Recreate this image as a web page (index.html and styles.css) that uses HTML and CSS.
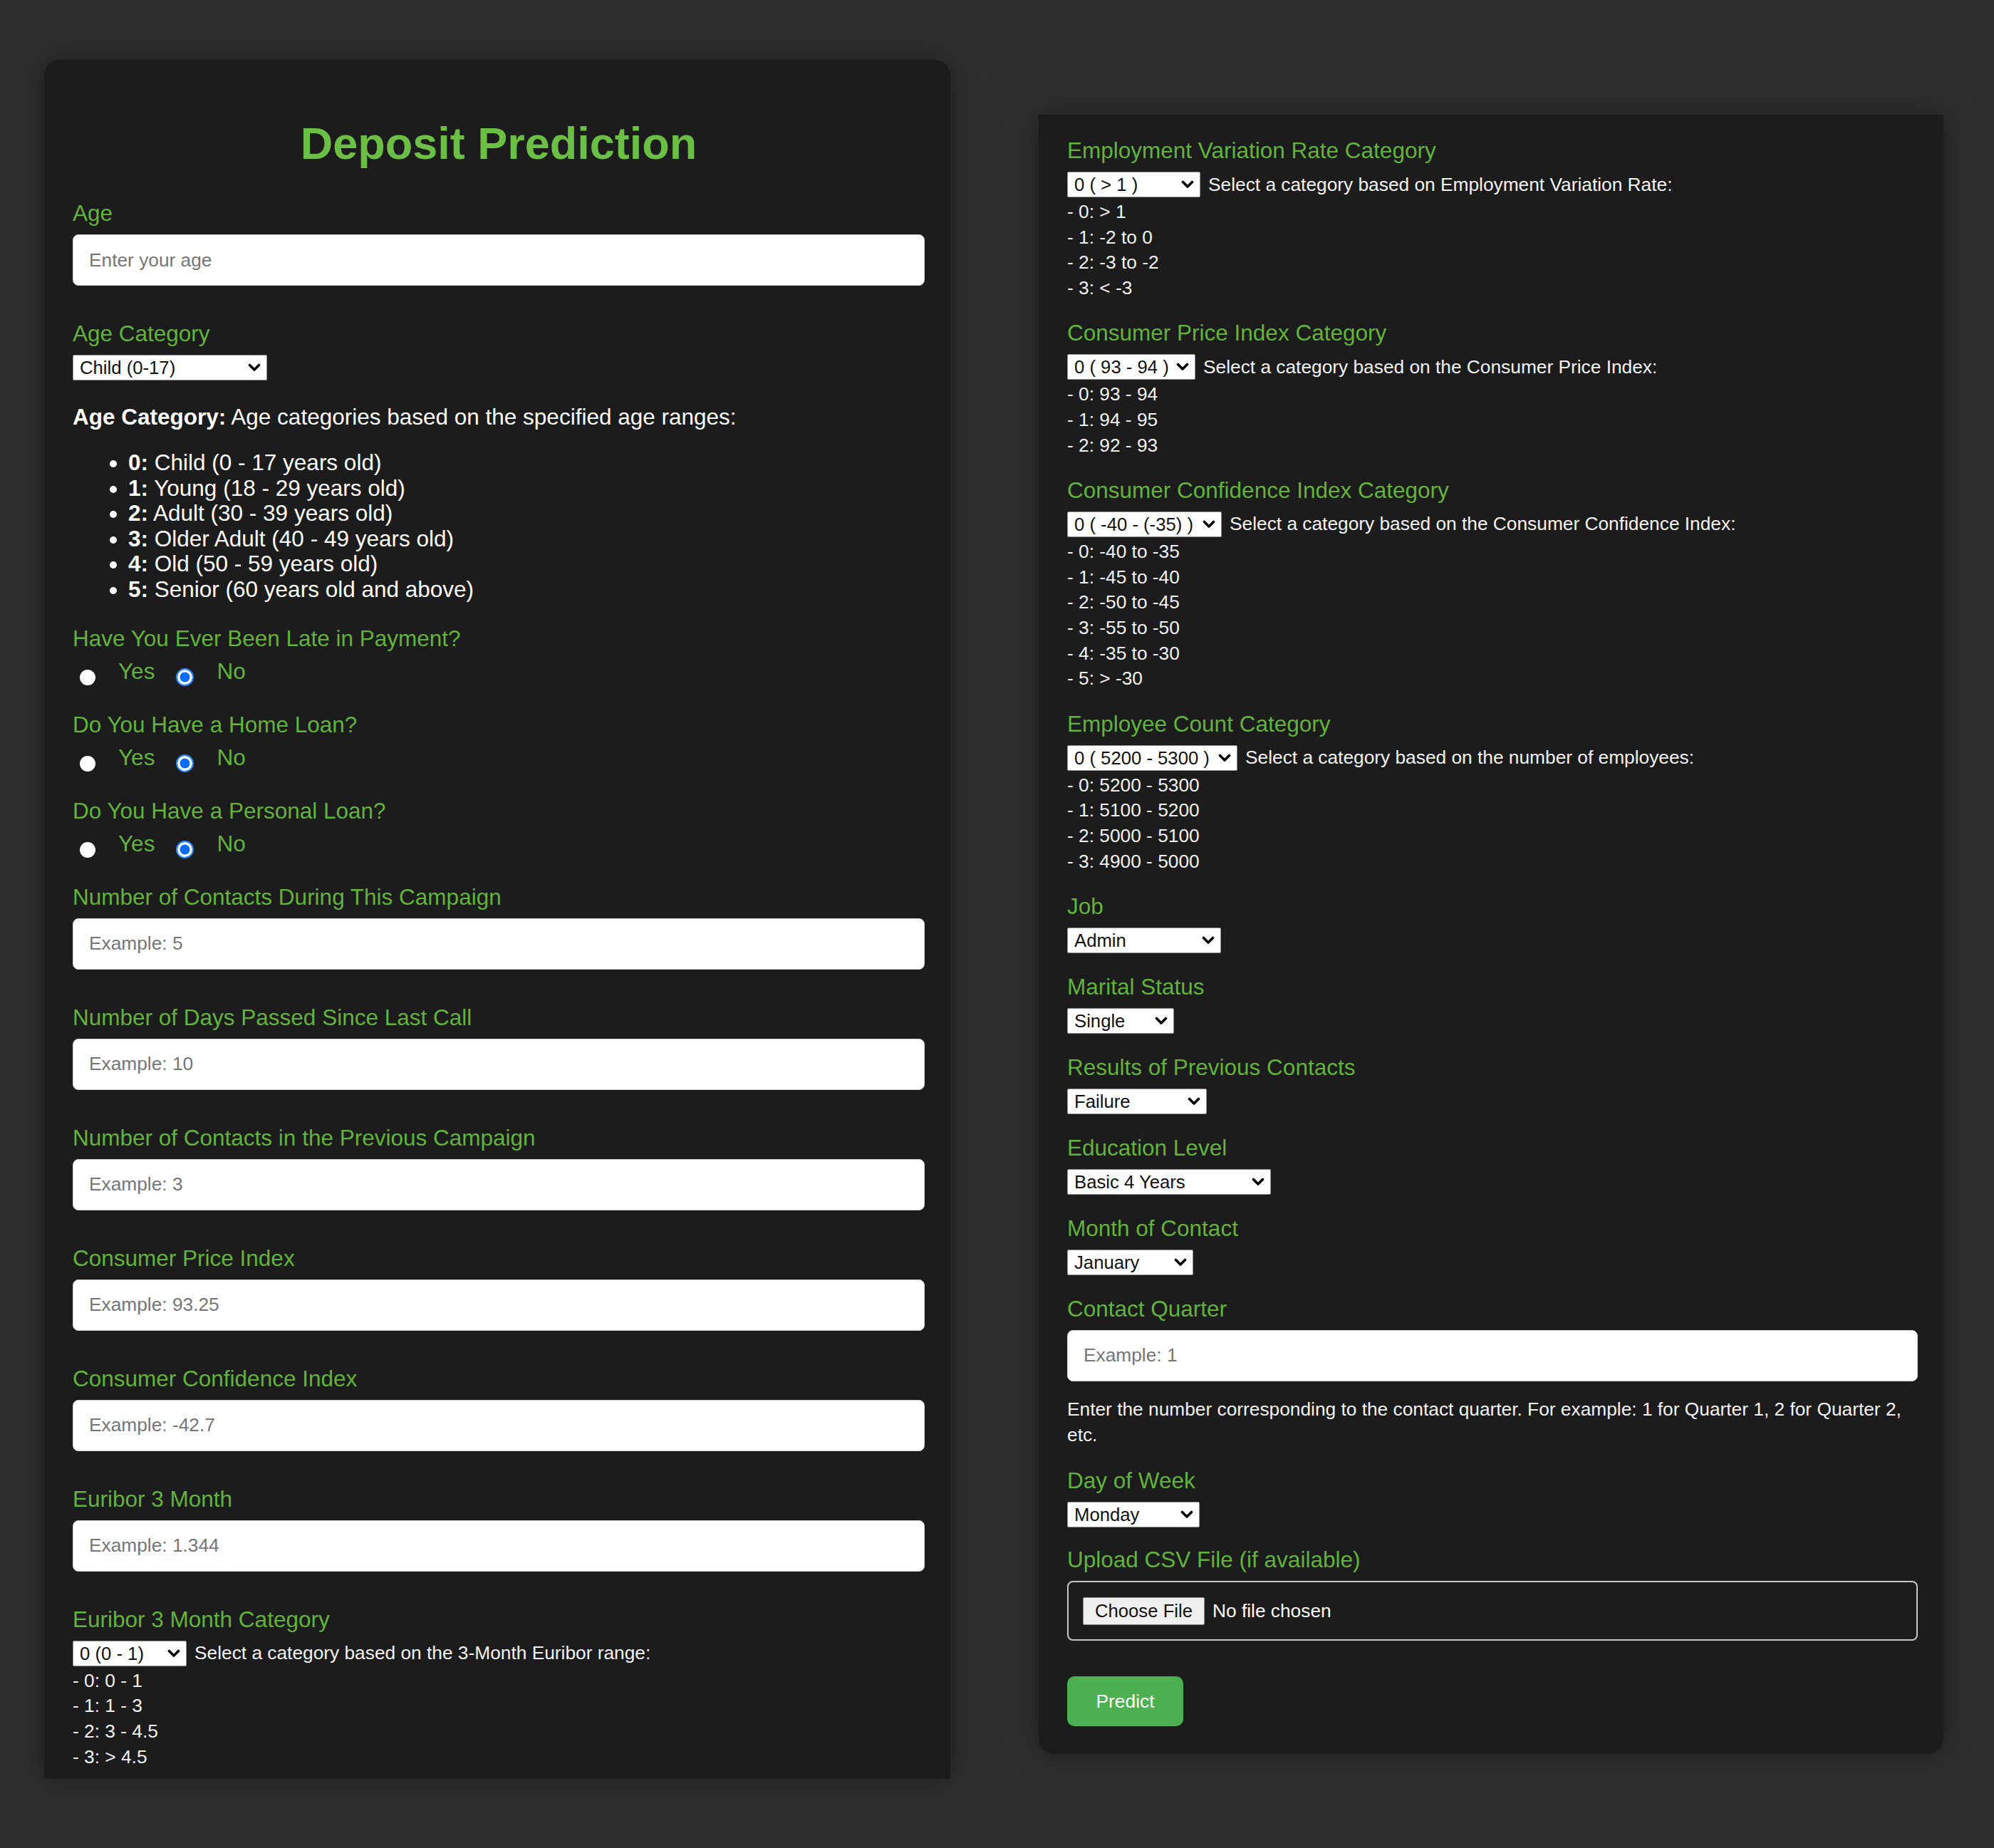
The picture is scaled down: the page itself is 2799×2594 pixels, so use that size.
FILE: index.html
```html
<!DOCTYPE html>
<html lang="en">
<head>
<meta charset="utf-8">
<title>Deposit Prediction</title>
<link rel="stylesheet" href="styles.css">
</head>
<body>
<main class="page">
  <section class="card card--left">
    <h1 class="title">Deposit Prediction</h1>

    <div class="field">
      <label class="label" for="age">Age</label>
      <input class="text-input" id="age" type="text" placeholder="Enter your age">
    </div>

    <div class="field-plain">
      <label class="label" for="agecat">Age Category</label>
      <select class="select select--age" id="agecat"><option>Child (0-17)</option></select>
    </div>

    <p class="note"><strong>Age Category:</strong> Age categories based on the specified age ranges:</p>
    <ul class="age-list">
      <li><strong>0:</strong> Child (0 - 17 years old)</li>
      <li><strong>1:</strong> Young (18 - 29 years old)</li>
      <li><strong>2:</strong> Adult (30 - 39 years old)</li>
      <li><strong>3:</strong> Older Adult (40 - 49 years old)</li>
      <li><strong>4:</strong> Old (50 - 59 years old)</li>
      <li><strong>5:</strong> Senior (60 years old and above)</li>
    </ul>

    <div class="radio-field">
      <div class="label label--tight">Have You Ever Been Late in Payment?</div>
      <div class="radio-row">
        <input class="radio" type="radio" name="late" id="late-yes"><label class="radio-text" for="late-yes">Yes</label>
        <input class="radio" type="radio" name="late" id="late-no" checked><label class="radio-text" for="late-no">No</label>
      </div>
    </div>

    <div class="radio-field">
      <div class="label label--tight">Do You Have a Home Loan?</div>
      <div class="radio-row">
        <input class="radio" type="radio" name="home" id="home-yes"><label class="radio-text" for="home-yes">Yes</label>
        <input class="radio" type="radio" name="home" id="home-no" checked><label class="radio-text" for="home-no">No</label>
      </div>
    </div>

    <div class="radio-field">
      <div class="label label--tight">Do You Have a Personal Loan?</div>
      <div class="radio-row">
        <input class="radio" type="radio" name="personal" id="personal-yes"><label class="radio-text" for="personal-yes">Yes</label>
        <input class="radio" type="radio" name="personal" id="personal-no" checked><label class="radio-text" for="personal-no">No</label>
      </div>
    </div>

    <div class="field">
      <label class="label" for="campaign">Number of Contacts During This Campaign</label>
      <input class="text-input" id="campaign" type="text" placeholder="Example: 5">
    </div>

    <div class="field">
      <label class="label" for="pdays">Number of Days Passed Since Last Call</label>
      <input class="text-input" id="pdays" type="text" placeholder="Example: 10">
    </div>

    <div class="field">
      <label class="label" for="previous">Number of Contacts in the Previous Campaign</label>
      <input class="text-input" id="previous" type="text" placeholder="Example: 3">
    </div>

    <div class="field">
      <label class="label" for="cpi">Consumer Price Index</label>
      <input class="text-input" id="cpi" type="text" placeholder="Example: 93.25">
    </div>

    <div class="field">
      <label class="label" for="cci">Consumer Confidence Index</label>
      <input class="text-input" id="cci" type="text" placeholder="Example: -42.7">
    </div>

    <div class="field">
      <label class="label" for="euribor">Euribor 3 Month</label>
      <input class="text-input" id="euribor" type="text" placeholder="Example: 1.344">
    </div>

    <div class="cat cat--last">
      <label class="label" for="eurcat">Euribor 3 Month Category</label>
      <div class="select-row">
        <select class="select select--eur" id="eurcat"><option>0 (0 - 1)</option></select>
        <span class="hint">Select a category based on the 3-Month Euribor range:</span>
      </div>
      <div class="ranges">
        <div>- 0: 0 - 1</div>
        <div>- 1: 1 - 3</div>
        <div>- 2: 3 - 4.5</div>
        <div>- 3: &gt; 4.5</div>
      </div>
    </div>
  </section>

  <section class="card card--right">
    <div class="cat">
      <label class="label" for="evr">Employment Variation Rate Category</label>
      <div class="select-row">
        <select class="select select--evr" id="evr"><option>0 ( &gt; 1 )</option></select>
        <span class="hint">Select a category based on Employment Variation Rate:</span>
      </div>
      <div class="ranges">
        <div>- 0: &gt; 1</div>
        <div>- 1: -2 to 0</div>
        <div>- 2: -3 to -2</div>
        <div>- 3: &lt; -3</div>
      </div>
    </div>

    <div class="cat">
      <label class="label" for="cpicat">Consumer Price Index Category</label>
      <div class="select-row">
        <select class="select select--cpi" id="cpicat"><option>0 ( 93 - 94 )</option></select>
        <span class="hint">Select a category based on the Consumer Price Index:</span>
      </div>
      <div class="ranges">
        <div>- 0: 93 - 94</div>
        <div>- 1: 94 - 95</div>
        <div>- 2: 92 - 93</div>
      </div>
    </div>

    <div class="cat">
      <label class="label" for="ccicat">Consumer Confidence Index Category</label>
      <div class="select-row">
        <select class="select select--cci" id="ccicat"><option>0 ( -40 - (-35) )</option></select>
        <span class="hint">Select a category based on the Consumer Confidence Index:</span>
      </div>
      <div class="ranges">
        <div>- 0: -40 to -35</div>
        <div>- 1: -45 to -40</div>
        <div>- 2: -50 to -45</div>
        <div>- 3: -55 to -50</div>
        <div>- 4: -35 to -30</div>
        <div>- 5: &gt; -30</div>
      </div>
    </div>

    <div class="cat">
      <label class="label" for="empcat">Employee Count Category</label>
      <div class="select-row">
        <select class="select select--emp" id="empcat"><option>0 ( 5200 - 5300 )</option></select>
        <span class="hint">Select a category based on the number of employees:</span>
      </div>
      <div class="ranges">
        <div>- 0: 5200 - 5300</div>
        <div>- 1: 5100 - 5200</div>
        <div>- 2: 5000 - 5100</div>
        <div>- 3: 4900 - 5000</div>
      </div>
    </div>

    <div class="field-select">
      <label class="label" for="job">Job</label>
      <select class="select select--job" id="job"><option>Admin</option></select>
    </div>

    <div class="field-select">
      <label class="label" for="marital">Marital Status</label>
      <select class="select select--marital" id="marital"><option>Single</option></select>
    </div>

    <div class="field-select">
      <label class="label" for="poutcome">Results of Previous Contacts</label>
      <select class="select select--poutcome" id="poutcome"><option>Failure</option></select>
    </div>

    <div class="field-select">
      <label class="label" for="education">Education Level</label>
      <select class="select select--edu" id="education"><option>Basic 4 Years</option></select>
    </div>

    <div class="field-select">
      <label class="label" for="month">Month of Contact</label>
      <select class="select select--month" id="month"><option>January</option></select>
    </div>

    <div class="field-quarter">
      <label class="label" for="quarter">Contact Quarter</label>
      <input class="text-input" id="quarter" type="text" placeholder="Example: 1">
      <p class="help">Enter the number corresponding to the contact quarter. For example: 1 for Quarter 1, 2 for Quarter 2, etc.</p>
    </div>

    <div class="field-select field-select--day">
      <label class="label" for="day">Day of Week</label>
      <select class="select select--day" id="day"><option>Monday</option></select>
    </div>

    <div class="field-file">
      <div class="label">Upload CSV File (if available)</div>
      <label class="file-box">
        <span class="file-btn">Choose File</span>
        <span class="file-name">No file chosen</span>
      </label>
    </div>

    <button class="btn" type="button">Predict</button>
  </section>
</main>
</body>
</html>
```

FILE: styles.css
```css
* {
  box-sizing: border-box;
}

html,
body {
  margin: 0;
  padding: 0;
}

body {
  width: 2799px;
  height: 2594px;
  overflow: hidden;
  background: #2e2e2e;
  color: #ffffff;
  font-family: "Liberation Sans", Arial, sans-serif;
}

.page {
  display: flex;
  align-items: flex-start;
  gap: 124px;
  padding: 84px 0 0 62px;
}

.card {
  background: #1c1c1c;
  box-shadow: 0 0 40px rgba(0, 0, 0, 0.35);
  padding-left: 40px;
  padding-right: 36px;
}

.card--left {
  width: 1272px;
  padding-top: 40px;
  padding-bottom: 13px;
  border-radius: 22px 22px 0 0;
}

.card--right {
  width: 1270px;
  margin-top: 77px;
  padding-top: 32px;
  padding-bottom: 39px;
  border-radius: 0 0 22px 22px;
}

.title {
  margin: 41px 0 44px;
  font-size: 63px;
  line-height: 72px;
  font-weight: 700;
  color: #6bbf45;
  text-align: center;
}

.label {
  display: block;
  margin: 0 0 12px;
  font-size: 31.5px;
  line-height: 36px;
  color: #62b33c;
}

.label--tight {
  margin-bottom: 10px;
}

.field {
  margin-bottom: 49px;
}

.field-plain {
  margin-bottom: 33px;
}

.text-input {
  display: block;
  width: 100%;
  height: 72px;
  margin: 0;
  padding: 0 22px;
  background: #ffffff;
  border: 1px solid #d2d2d2;
  border-radius: 8px;
  font-family: "Liberation Sans", Arial, sans-serif;
  font-size: 26.3px;
  color: #222222;
}

.text-input::placeholder {
  color: #767676;
}

.select {
  display: block;
  appearance: none;
  -webkit-appearance: none;
  height: 36px;
  margin: 0;
  padding: 0 30px 0 9px;
  background-color: #ffffff;
  background-image: url("data:image/svg+xml,%3Csvg xmlns='http://www.w3.org/2000/svg' width='18' height='12' viewBox='0 0 18 12'%3E%3Cpath d='M2.5 2.5 9 9l6.5-6.5' fill='none' stroke='%23000' stroke-width='3.6' stroke-linecap='round' stroke-linejoin='round'/%3E%3C/svg%3E");
  background-repeat: no-repeat;
  background-position: right 8px center;
  background-size: 18px 12px;
  border: 1px solid #8f8f8f;
  border-radius: 2px;
  font-family: "Liberation Sans", Arial, sans-serif;
  font-size: 25.7px;
  color: #111111;
}

.select--age { width: 273px; }
.select--eur { width: 160px; }
.select--evr { width: 187px; }
.select--cpi { width: 180px; }
.select--cci { width: 217px; }
.select--emp { width: 239px; }
.select--job { width: 216px; }
.select--marital { width: 150px; }
.select--poutcome { width: 196px; }
.select--edu { width: 286px; }
.select--month { width: 177px; }
.select--day { width: 186px; }

.note {
  margin: 0;
  font-size: 31.5px;
  line-height: 36px;
}

.age-list {
  margin: 29px 0 32px;
  padding-left: 78px;
  font-size: 31.5px;
  line-height: 35.6px;
}

.radio-field {
  margin-bottom: 39px;
}

.radio-row {
  display: flex;
  align-items: flex-start;
  height: 36px;
}

.radio {
  appearance: none;
  -webkit-appearance: none;
  flex: none;
  width: 22px;
  height: 22px;
  margin: 16px 0 0 10px;
  border-radius: 50%;
  background: #ffffff;
}

.radio:checked {
  width: 25px;
  height: 25px;
  margin-top: 14.5px;
  background: #0a6cff;
  border: 2.5px solid #2d8bff;
  box-shadow: inset 0 0 0 3.5px #ffffff;
}

.radio-text {
  margin: 0 20px 0 32px;
  font-size: 31.5px;
  line-height: 36px;
  color: #62b33c;
}

.cat {
  margin-bottom: 26.5px;
}

.cat--last {
  margin-bottom: 0;
}

.select-row {
  display: flex;
  align-items: center;
}

.hint {
  margin-left: 11px;
  font-size: 26.3px;
  color: #f2f2f2;
}

.ranges {
  padding-top: 3px;
  font-size: 26.3px;
  line-height: 35.7px;
  color: #f2f2f2;
}

.field-select {
  margin-bottom: 29px;
}

.field-select--day {
  margin-bottom: 27.5px;
}

.field-quarter .help {
  margin: 21px 0 28px;
  font-size: 26.3px;
  line-height: 36px;
  color: #f2f2f2;
}

.file-box {
  display: flex;
  align-items: center;
  height: 84px;
  margin-bottom: 50px;
  padding: 0 20px;
  border: 2px solid #c6c6c6;
  border-radius: 8px;
}

.file-btn {
  display: flex;
  align-items: center;
  justify-content: center;
  width: 171px;
  height: 39px;
  background: #efefef;
  border: 1px solid #8a8a8a;
  border-radius: 2px;
  font-size: 25.7px;
  color: #111111;
}

.file-name {
  margin-left: 11px;
  font-size: 26.3px;
  color: #ffffff;
}

.btn {
  display: block;
  width: 163px;
  height: 70px;
  padding: 0;
  background: #4caf50;
  border: 0;
  border-radius: 10px;
  font-family: "Liberation Sans", Arial, sans-serif;
  font-size: 26.4px;
  color: #ffffff;
}
```
